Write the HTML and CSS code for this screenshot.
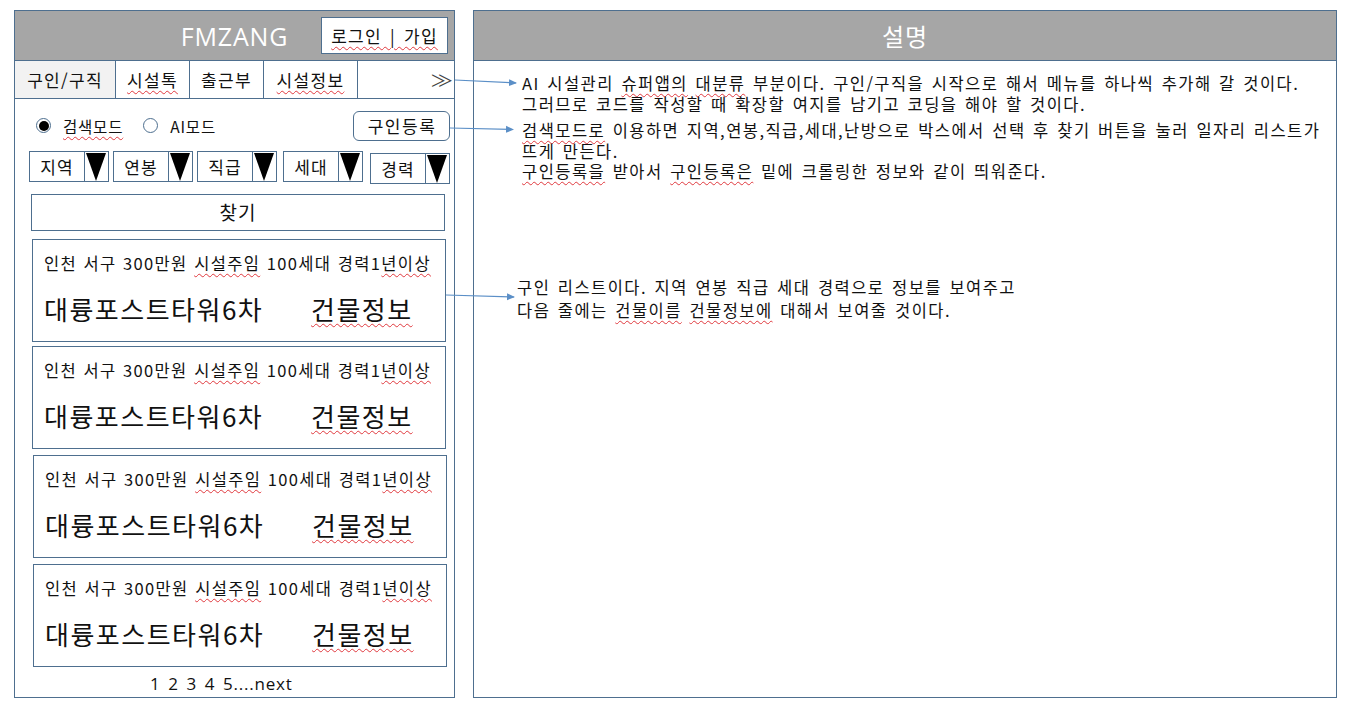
FILE: index.html
```html
<!DOCTYPE html>
<html lang="ko">
<head>
<meta charset="utf-8">
<title>FMZANG</title>
<link rel="stylesheet" href="styles.css">
</head>
<body>
<div class="page">
  <section class="app">
    <header class="app-head">
      <span></span>
      <h1 class="logo">FMZANG</h1>
      <a class="login"><span class="sp">로그인 | 가입</span></a>
    </header>
    <nav class="tabs">
      <span class="tab active">구인/구직</span>
      <span class="tab"><span class="sp">시설톡</span></span>
      <span class="tab">출근부</span>
      <span class="tab"><span class="sp">시설정보</span></span>
      <span class="tab more">≫</span>
    </nav>
    <div class="app-body">
      <div class="mode-row">
        <label class="radio"><span class="dot on"></span><span class="sp">검색모드</span></label>
        <label class="radio"><span class="dot"></span>AI모드</label>
        <button class="reg">구인등록</button>
      </div>
      <div class="filters">
        <div class="sel"><span class="sel-txt">지역</span><span class="sel-arr"><svg viewBox="0 0 22 29"><polygon points="1,1 21,1 11,29" /></svg></span></div>
        <div class="sel"><span class="sel-txt">연봉</span><span class="sel-arr"><svg viewBox="0 0 22 29"><polygon points="1,1 21,1 11,29" /></svg></span></div>
        <div class="sel"><span class="sel-txt">직급</span><span class="sel-arr"><svg viewBox="0 0 22 29"><polygon points="1,1 21,1 11,29" /></svg></span></div>
        <div class="sel s4"><span class="sel-txt">세대</span><span class="sel-arr"><svg viewBox="0 0 22 29"><polygon points="1,1 21,1 11,29" /></svg></span></div>
        <div class="sel s5"><span class="sel-txt">경력</span><span class="sel-arr"><svg viewBox="0 0 22 29"><polygon points="1,1 21,1 11,29" /></svg></span></div>
      </div>
      <button class="find">찾기</button>
      <ul class="cards">
        <li class="card">
          <p class="meta">인천 서구 300만원 <span class="sp">시설주임</span> 100세대 경력1<span class="sp">년이상</span></p>
          <p class="title"><span class="name">대륭포스트타워6차</span><span class="sp">건물정보</span></p>
        </li>
        <li class="card">
          <p class="meta">인천 서구 300만원 <span class="sp">시설주임</span> 100세대 경력1<span class="sp">년이상</span></p>
          <p class="title"><span class="name">대륭포스트타워6차</span><span class="sp">건물정보</span></p>
        </li>
        <li class="card c3">
          <p class="meta">인천 서구 300만원 <span class="sp">시설주임</span> 100세대 경력1<span class="sp">년이상</span></p>
          <p class="title"><span class="name">대륭포스트타워6차</span><span class="sp">건물정보</span></p>
        </li>
        <li class="card c3">
          <p class="meta">인천 서구 300만원 <span class="sp">시설주임</span> 100세대 경력1<span class="sp">년이상</span></p>
          <p class="title"><span class="name">대륭포스트타워6차</span><span class="sp">건물정보</span></p>
        </li>
      </ul>
      <div class="pager">1 2 3 4 5....next</div>
    </div>
  </section>

  <section class="desc">
    <header class="desc-head"><h2>설명</h2></header>
    <div class="desc-body">
      <p class="note n1">AI 시설관리 <span class="sp">슈퍼앱의</span> <span class="sp">대분류</span> 부분이다. 구인/구직을 시작으로 해서 메뉴를 하나씩 추가해 갈 것이다.<br>그러므로 코드를 작성할 때 확장할 여지를 남기고 코딩을 해야 할 것이다.</p>
      <p class="note n2"><span class="sp">검색모드로</span> 이용하면 지역,연봉,직급,세대,난방으로 박스에서 선택 후 찾기 버튼을 눌러 일자리 리스트가<br>뜨게 만든다.<br><span class="sp">구인등록을</span> 받아서 <span class="sp">구인등록은</span> 밑에 크롤링한 정보와 같이 띄워준다.</p>
      <p class="note n3">구인 리스트이다. 지역 연봉 직급 세대 경력으로 정보를 보여주고<br>다음 줄에는 <span class="sp">건물이름</span> <span class="sp">건물정보에</span> 대해서 보여줄 것이다.</p>
    </div>
  </section>

  <svg class="arrows" width="1349" height="714" viewBox="0 0 1349 714">
    <defs>
      <marker id="ah" markerWidth="8" markerHeight="8" refX="7" refY="4" orient="auto" markerUnits="userSpaceOnUse">
        <polygon points="0,0.5 8,4 0,7.5" fill="#5b8fc7"/>
      </marker>
    </defs>
    <line x1="455" y1="80" x2="516" y2="83" stroke="#5b8fc7" stroke-width="1.2" marker-end="url(#ah)"/>
    <line x1="450" y1="128" x2="513" y2="129.5" stroke="#5b8fc7" stroke-width="1.2" marker-end="url(#ah)"/>
    <line x1="446" y1="295" x2="514" y2="297" stroke="#5b8fc7" stroke-width="1.2" marker-end="url(#ah)"/>
  </svg>
</div>
</body>
</html>
```

FILE: styles.css
```css
* { box-sizing: border-box; }
html, body { margin: 0; padding: 0; background: #ffffff; }
body {
  font-family: "Noto Sans CJK KR", "Noto Sans", sans-serif;
  color: #111;
}
.page {
  position: relative;
  width: 1349px;
  height: 714px;
  display: flex;
  align-items: flex-start;
  padding: 10px 0 0 14px;
  gap: 18px;
}
.sp {
  text-decoration: underline wavy #e0393e;
  text-decoration-thickness: 1px;
  text-underline-offset: 3px;
}

/* left app panel */
.app {
  width: 441px;
  height: 688px;
  border: 1px solid #4e6f8f;
  display: flex;
  flex-direction: column;
}
.app-head {
  height: 50px;
  background: #a6a6a6;
  display: grid;
  grid-template-columns: 1fr auto 1fr;
  align-items: center;
  border-bottom: 1px solid #4e6f8f;
}
.logo {
  margin: 0;
  font-family: "Open Sans", "Noto Sans", sans-serif;
  font-weight: 400;
  font-size: 25px;
  color: #ffffff;
  letter-spacing: 0.8px;
}
.login {
  justify-self: end;
  margin-right: 6px;
  width: 127px;
  height: 37px;
  background: #fff;
  border: 1px solid #4e6f8f;
  display: flex;
  align-items: center;
  justify-content: center;
  font-size: 17px;
  letter-spacing: 1.3px;
  word-spacing: 2px;
  color: #111;
}
.tabs {
  display: flex;
  height: 38px;
  border-bottom: 1px solid #4e6f8f;
}
.tab {
  display: flex;
  align-items: center;
  justify-content: center;
  font-size: 17px;
  letter-spacing: 1.3px;
  border-right: 1px solid #4e6f8f;
  height: 100%;
}
.tab:nth-child(1) { width: 101px; background: #f2f2f2; }
.tab:nth-child(2) { width: 74px; }
.tab:nth-child(3) { width: 74px; }
.tab:nth-child(4) { width: 94px; }
.tab.more {
  flex: 1;
  border-right: none;
  justify-content: flex-end;
  padding-right: 1px;
  letter-spacing: 0;
  font-family: "DejaVu Sans", sans-serif;
  font-size: 22px;
  font-weight: 200;
  color: #444;
}
.app-body {
  flex: 1;
  display: flex;
  flex-direction: column;
  padding: 11px 4px 0 14px;
}
.mode-row {
  display: flex;
  align-items: center;
  height: 31px;
}
.radio {
  display: flex;
  align-items: center;
  font-size: 15.5px;
  letter-spacing: 0.8px;
  margin-left: 7px;
}
.radio + .radio { margin-left: 20px; }
.dot {
  width: 15px;
  height: 15px;
  border: 1.2px solid #4e6f8f;
  border-radius: 50%;
  margin-right: 12px;
  display: flex;
  align-items: center;
  justify-content: center;
}
.dot.on::after {
  content: "";
  width: 10px;
  height: 10px;
  border-radius: 50%;
  background: #000;
}
.reg {
  margin-left: auto;
  width: 97px;
  height: 30px;
  background: #fff;
  border: 1px solid #4e6f8f;
  border-radius: 6px;
  font-family: inherit;
  font-size: 17px;
  letter-spacing: 1.5px;
  color: #111;
  padding: 0 0 0 1px;
}
.filters {
  display: flex;
  gap: 4px;
  margin-top: 10px;
  align-items: flex-start;
}
.sel {
  width: 82px;
  height: 31px;
  border: 1px solid #4e6f8f;
  display: flex;
}
.sel.s4 { margin-left: 2px; }
.sel.s5 { margin-top: 2px; margin-left: 3px; }
.sel-txt {
  flex: 1;
  display: flex;
  align-items: center;
  justify-content: center;
  font-size: 17px;
  letter-spacing: 1.2px;
  border-right: 1px solid #4e6f8f;
}
.sel-arr { width: 23px; display: flex; }
.sel-arr svg { width: 22px; height: 29px; display: block; }
.sel-arr polygon { fill: #000; }
.find {
  margin: 10px 0 0 2px;
  width: 414px;
  height: 37px;
  background: #fff;
  border: 1px solid #4e6f8f;
  font-family: inherit;
  font-size: 19px;
  letter-spacing: 1px;
  color: #111;
  padding: 0 0 3px 0;
}
.cards {
  list-style: none;
  margin: 8px 0 0 3px;
  padding: 0;
  display: flex;
  flex-direction: column;
  gap: 4px;
}
.card {
  width: 414px;
  height: 103px;
  border: 1px solid #4e6f8f;
  padding: 12px 0 0 11px;
}
.card.c3 { margin-left: 1px; margin-top: 2px; }
.meta {
  margin: 0;
  font-size: 16.5px;
  line-height: 22px;
  white-space: nowrap;
  letter-spacing: 1.35px;
  word-spacing: 0.5px;
}
.title {
  margin: 18px 0 0 0;
  font-size: 26px;
  line-height: 34px;
  white-space: nowrap;
  display: flex;
  letter-spacing: 1.5px;
}
.name { width: 267px; }
.pager {
  margin-top: 5px;
  padding-left: 121px;
  font-family: "Open Sans", "Noto Sans", sans-serif;
  font-size: 17px;
  line-height: 24px;
  letter-spacing: 0.8px;
  word-spacing: 2.5px;
}

/* right description panel */
.desc {
  width: 864px;
  height: 688px;
  border: 1px solid #4e6f8f;
  display: flex;
  flex-direction: column;
}
.desc-head {
  height: 50px;
  background: #a6a6a6;
  border-bottom: 1px solid #4e6f8f;
  display: flex;
  align-items: center;
  justify-content: center;
}
.desc-head h2 {
  margin: 0;
  font-weight: 400;
  font-size: 24px;
  letter-spacing: 1px;
  color: #fff;
}
.desc-body { padding: 12px 0 0 48px; }
.note {
  margin: 0;
  font-size: 16.5px;
  line-height: 20.5px;
  white-space: nowrap;
  letter-spacing: 1.45px;
  word-spacing: 1.5px;
}
.n2 { margin-top: 6px; }
.n3 { margin-top: 94px; margin-left: -5px; line-height: 23px; }

.arrows {
  position: absolute;
  left: 0;
  top: 0;
  pointer-events: none;
}
```
